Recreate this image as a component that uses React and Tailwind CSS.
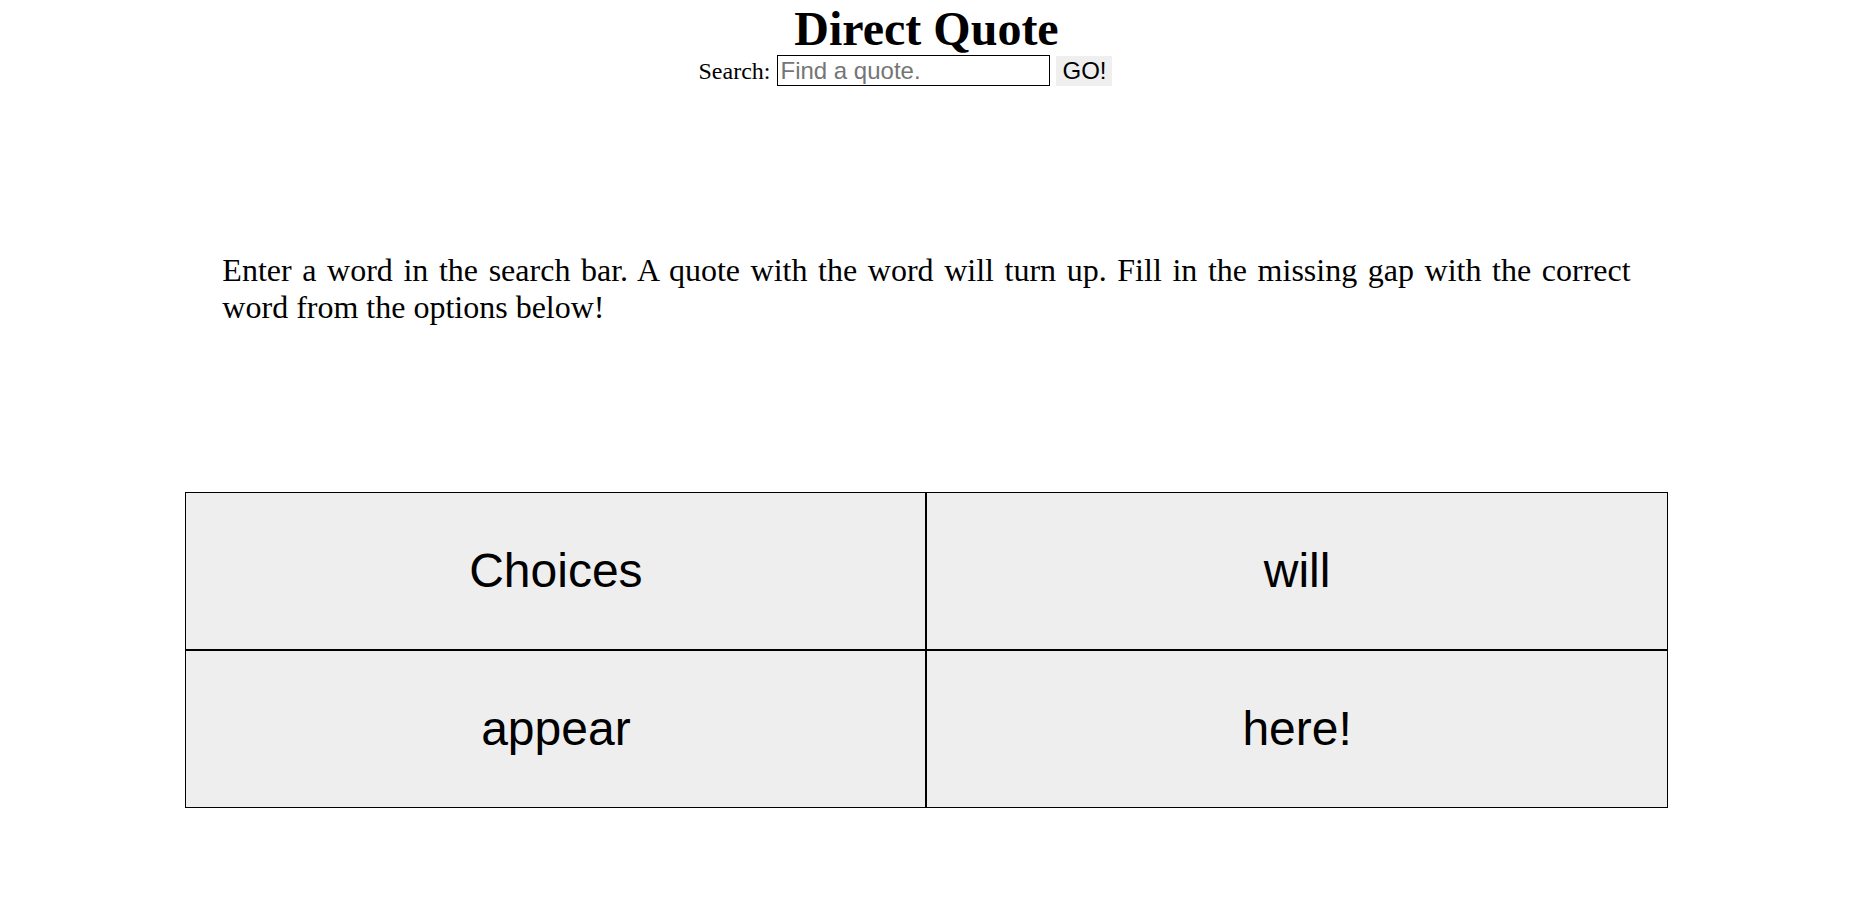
export default function App() {
  const cells = ["Choices", "will", "appear", "here!"];
  return (
    <div className="min-h-[900px] w-full bg-white text-black font-['Liberation_Serif',serif]">
      <h1 className="pt-[2px] text-center text-[48px] font-bold leading-[53px]">Direct Quote</h1>
      <div className="flex h-[31px] justify-center">
        <div className="mr-[42px] flex h-[31px] items-center">
          <span className="text-[24px] leading-[28px]">Search:</span>
          <input
            type="text"
            placeholder="Find a quote."
            className="ml-[7px] h-[31px] w-[273px] border border-black px-[2px] font-['Liberation_Sans',Arial,sans-serif] text-[24px] leading-[28px] text-black outline-none placeholder:text-[#757575]"
          />
          <button className="ml-[6px] h-[30px] self-end bg-[#efefef] px-[6px] font-['Liberation_Sans',Arial,sans-serif] text-[24px] leading-[28px] text-black">
            GO!
          </button>
        </div>
      </div>
      <p className="mx-auto mt-[166px] w-[76%] text-justify text-[32px] leading-[36.8px]">
        Enter a word in the search bar. A quote with the word will turn up. Fill in the missing gap with the correct word from the options below!
      </p>
      <div className="mx-auto mt-[166px] grid w-[80%] grid-cols-2">
        {cells.map((c) => (
          <div
            key={c}
            className="flex h-[158px] items-center justify-center border border-black bg-[#eeeeee] font-['Liberation_Sans',Arial,sans-serif] text-[48px]"
          >
            {c}
          </div>
        ))}
      </div>
    </div>
  );
}
